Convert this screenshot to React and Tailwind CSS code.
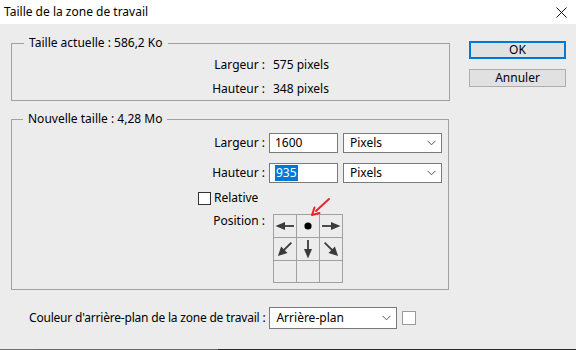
import React from 'react';

function Chevron() {
  return (
    <svg width="9" height="6" viewBox="0 0 9 6" className="text-[#555]">
      <path d="M0.5 0.8 L4.5 4.8 L8.5 0.8" fill="none" stroke="currentColor" strokeWidth="1" />
    </svg>
  );
}

function Select({ label, className }) {
  return (
    <div className={"bg-white border border-[#7a7a7a] flex items-center justify-between pl-[6px] pr-[5px] " + className}>
      <span>{label}</span>
      <Chevron />
    </div>
  );
}

function Arrow({ dir }) {
  const color = '#3a3a3a';
  if (dir === 'dot') {
    return (
      <svg width="22" height="22" viewBox="0 0 22 22">
        <circle cx="11" cy="11" r="3.6" fill="#000" />
      </svg>
    );
  }
  const rot = { left: 0, right: 180, down: 270, dl: 315, dr: 225 }[dir];
  const isDiag = dir === 'dl' || dir === 'dr';
  return (
    <svg width="22" height="22" viewBox="0 0 22 22">
      <g transform={`rotate(${rot} 11 11)`}>
        {isDiag ? (
          <>
            <line x1="9" y1="11" x2="20" y2="11" stroke={color} strokeWidth="1.8" />
            <polygon points="1,11 10,6.5 10,15.5" fill={color} />
          </>
        ) : (
          <>
            <line x1="10" y1="11" x2="20" y2="11" stroke={color} strokeWidth="1.8" />
            <polygon points="1.5,11 11,7 11,15" fill={color} />
          </>
        )}
      </g>
    </svg>
  );
}

function PositionGrid() {
  const cells = ['left', 'dot', 'right', 'dl', 'down', 'dr', null, null, null];
  return (
    <div className="relative">
      <div className="grid grid-cols-[22px_22px_22px] grid-rows-[22px_22px_21px] gap-px bg-[#a0a0a0] border border-[#a0a0a0] w-fit">
        {cells.map((c, i) => (
          <div key={i} className="bg-[#ececec] flex items-center justify-center">
            {c && <Arrow dir={c} />}
          </div>
        ))}
      </div>
      {/* red annotation arrow */}
      <svg className="absolute left-[37px] top-[-17px]" width="22" height="20" viewBox="0 0 22 20">
        <line x1="19" y1="2" x2="6" y2="14" stroke="#e8262a" strokeWidth="2" strokeLinecap="round" />
        <path d="M2 18 L4.5 10.5 M2 18 L9.5 16" stroke="#e8262a" strokeWidth="2" strokeLinecap="round" fill="none" />
      </svg>
    </div>
  );
}

export default function App() {
  return (
    <div className="w-[576px] h-[350px] bg-[#ececec] flex flex-col font-['Noto_Sans',sans-serif] text-[12px] leading-[16px] text-black overflow-hidden">
      <div className="h-[24px] bg-white flex items-center justify-between pl-[4px] pr-[9px] shrink-0">
        <span>Taille de la zone de travail</span>
        <svg width="11" height="11" viewBox="0 0 11 11">
          <path d="M0.5 0.5 L10.5 10.5 M10.5 0.5 L0.5 10.5" stroke="#111" strokeWidth="1" />
        </svg>
      </div>

      <div className="flex flex-1">
        <div className="w-[450px] pl-[11px] pt-[11px] flex flex-col">
          <fieldset className="border border-[#a0a0a0] px-0 pt-[6px] pb-[3px] w-[439px]">
            <legend className="ml-[12px] px-[5px]">Taille actuelle : 586,2 Ko</legend>
            <div className="grid grid-cols-[253px_1fr] gap-x-[8px] gap-y-[8px]">
              <span className="text-right">Largeur :</span>
              <span>575 pixels</span>
              <span className="text-right">Hauteur :</span>
              <span>348 pixels</span>
            </div>
          </fieldset>

          <fieldset className="border border-[#a0a0a0] mt-[10px] pt-[6px] pb-[6px] w-[438px]">
            <legend className="ml-[11px] px-[5px]">Nouvelle taille : 4,28 Mo</legend>
            <div className="flex flex-col">
              <div className="flex items-center">
                <span className="w-[253px] text-right">Largeur :</span>
                <div className="ml-[4px] w-[69px] h-[20px] bg-white border border-[#7a7a7a] pl-[5px] flex items-center">1600</div>
                <Select label="Pixels" className="ml-[5px] w-[99px] h-[20px]" />
              </div>
              <div className="flex items-center mt-[10px]">
                <span className="w-[253px] text-right">Hauteur :</span>
                <div className="ml-[4px] w-[69px] h-[20px] bg-white border border-[#7a7a7a] pl-[5px] flex items-center">
                  <span className="bg-[#0078d7] text-white px-px">935</span>
                </div>
                <Select label="Pixels" className="ml-[5px] w-[99px] h-[20px]" />
              </div>
              <div className="flex items-center mt-[7px] pl-[186px]">
                <div className="w-[13px] h-[13px] border border-[#333] bg-white"></div>
                <span className="ml-[3px]">Relative</span>
              </div>
              <div className="flex items-start mt-[7px]">
                <span className="w-[253px] text-right">Position :</span>
                <div className="ml-[8px] mt-px">
                  <PositionGrid />
                </div>
              </div>
            </div>
          </fieldset>

          <div className="flex items-center mt-[17px] pl-[18px]">
            <span className="whitespace-nowrap tracking-[-0.2px]">Couleur d'arrière-plan de la zone de travail :</span>
            <Select label="Arrière-plan" className="ml-[4px] w-[128px] h-[22px] shrink-0" />
            <div className="ml-[5px] w-[14px] h-[14px] bg-white border border-[#9a9a9a] shrink-0"></div>
          </div>
        </div>

        <div className="ml-[19px] pt-[17px] flex flex-col gap-[10px]">
          <button className="w-[97px] h-[18px] border-2 border-[#0078d7] bg-[#e1e1e1] flex items-center justify-center leading-none">OK</button>
          <button className="w-[97px] h-[18px] border border-[#adadad] bg-[#e1e1e1] flex items-center justify-center leading-none">Annuler</button>
        </div>
      </div>

      <div className="h-px flex shrink-0">
        <div className="w-[37px] bg-[#707070]"></div>
        <div className="w-[181px] bg-[#6a6a6a]"></div>
        <div className="flex-1 bg-[#2a2a2a]"></div>
      </div>
    </div>
  );
}
